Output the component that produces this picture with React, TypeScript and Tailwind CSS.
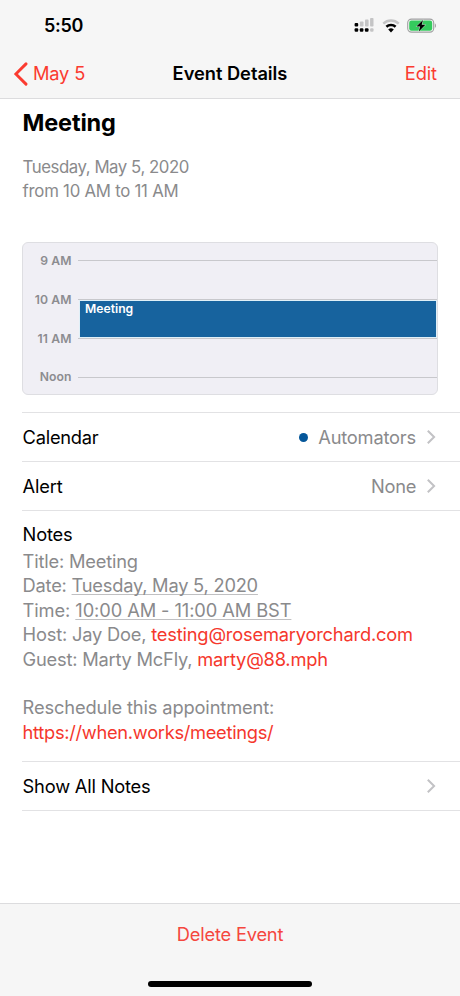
import React from "react";

type RowProps = {
  label: string;
  labelClass?: string;
  children?: React.ReactNode;
};

const SignalIcon = () => (
  <svg width="20" height="16" viewBox="0 0 20 16">
    <g fill="#c4c4c5">
      <rect x="5.9" y="3.4" width="3.6" height="5.2" rx="0.8" />
      <rect x="11" y="1.6" width="3.6" height="7" rx="0.8" />
      <rect x="16.1" y="0" width="3.4" height="8.6" rx="0.8" />
      <rect x="16.1" y="10.2" width="3.4" height="3.6" rx="1" />
    </g>
    <g fill="#000">
      <rect x="0.6" y="4.9" width="3.6" height="3.7" rx="1" />
      <rect x="0.6" y="10.2" width="3.6" height="3.6" rx="1" />
      <rect x="5.8" y="10.2" width="3.6" height="3.6" rx="1" />
      <rect x="10.9" y="10.2" width="3.6" height="3.6" rx="1" />
    </g>
  </svg>
);

const WifiIcon = () => (
  <svg width="18" height="14" viewBox="0 0 18 14" fill="none">
    <path d="M1.3 4.6a11.3 11.3 0 0 1 15.4 0" stroke="#c4c4c5" strokeWidth="2.5" />
    <path d="M4.4 7.8a6.8 6.8 0 0 1 9.2 0" stroke="#000" strokeWidth="2.6" />
    <path d="M9 13.4 6.2 10.6a4 4 0 0 1 5.6 0Z" fill="#000" />
  </svg>
);

const BatteryIcon = () => (
  <svg width="30" height="16" viewBox="0 0 30 16">
    <rect x="0.7" y="1.1" width="26" height="13" rx="3.8" fill="none" stroke="#a0a0a1" strokeWidth="1.1" />
    <rect x="2.2" y="2.5" width="23" height="10.2" rx="2.2" fill="#35cb5d" />
    <path d="M27.9 5.4c1.4.5 1.4 3.9 0 4.4Z" fill="#a0a0a1" />
    <path
      d="M16 1.9 9.4 8.5h3.7l-1.3 4.9 6.6-6.6h-3.7Z"
      fill="#000"
      stroke="#d8f5df"
      strokeWidth="0.9"
      paintOrder="stroke"
    />
  </svg>
);

const BackIcon = () => (
  <svg width="15" height="24" viewBox="0 0 15 24" fill="none">
    <path d="M13 1.9 2.9 12 13 22.1" stroke="#fb3b30" strokeWidth="2.9" strokeLinecap="round" />
  </svg>
);

const Chevron = () => (
  <svg className="ml-[10px]" width="10" height="16" viewBox="0 0 10 16" fill="none">
    <path d="m1.8 1.8 6.3 6.2-6.3 6.2" stroke="#c2c2c5" strokeWidth="2" />
  </svg>
);

const Row = ({ label, labelClass, children }: RowProps) => (
  <div className="ml-[22px] flex h-[49px] items-center border-t border-[#e2e2e4] pl-[0.6px] pr-6 pt-px text-[18.3px]">
    <span className={labelClass}>{label}</span>
    <span className="ml-auto flex items-center text-[#8a8a8c]">
      {children}
      <Chevron />
    </span>
  </div>
);

const Detected = ({ children }: { children: React.ReactNode }) => (
  <span className="underline decoration-[#c0c0c2] decoration-1 underline-offset-2 [text-decoration-skip-ink:none]">
    {children}
  </span>
);

const hours = ["9 AM", "10 AM", "11 AM", "Noon"];

const Timeline = () => (
  <div className="relative ml-[22px] mt-[38px] h-[153px] w-[416px] overflow-hidden rounded-[6px] border border-[#dedee2] bg-[#f0eff5]">
    <div className="-mt-[1.6px]">
      {hours.map((hour) => (
        <div key={hour} className="flex h-[38.8px] items-center">
          <span className="w-[48.6px] pt-px text-right text-[12.2px] font-semibold tracking-[0.1px] text-[#8c8c90]">{hour}</span>
          <span className="ml-[6.4px] h-px flex-1 bg-[#c8c8cc]" />
        </div>
      ))}
    </div>
    <div className="absolute left-[56px] top-[57px] h-[38px] w-[358px] border border-[#e0f0f8] bg-[#17639e] pl-[5px] text-[12.2px] font-semibold leading-4 text-white">
      Meeting
    </div>
  </div>
);

const App = () => (
  <div className="flex h-[996px] w-[460px] flex-col overflow-hidden whitespace-nowrap bg-white font-['Inter',sans-serif] text-black">
    <header className="h-[99px] border-b border-[#dcdcde] bg-[#f6f6f6]">
      <div className="flex h-[50px] items-center pl-11 pr-[23px] pt-px">
        <span className="text-[18px] font-semibold tracking-[-0.3px]">5:50</span>
        <span className="ml-auto flex items-center">
          <SignalIcon />
          <span className="ml-[8px] flex">
            <WifiIcon />
          </span>
          <span className="ml-[7px] flex">
            <BatteryIcon />
          </span>
        </span>
      </div>
      <div className="grid h-12 grid-cols-[1fr_auto_1fr] items-center px-[13px] text-[18.3px]">
        <span className="flex items-center gap-[5px] text-[#fb3b30]">
          <BackIcon />
          <span className="tracking-[-0.2px]">May 5</span>
        </span>
        <span className="font-semibold tracking-[-0.03px]">Event Details</span>
        <span className="pr-[10px] text-right tracking-[-0.1px] text-[#fb3b30]">Edit</span>
      </div>
    </header>

    <main className="flex-1">
      <h1 className="ml-[22.5px] mt-[8px] text-[23.5px] font-bold leading-8 tracking-[-0.15px]">Meeting</h1>
      <div className="ml-[22.6px] mt-4 text-[16.8px] leading-[24.4px] text-[#8a8a8c]">
        <p className="tracking-[-0.45px]">Tuesday, May 5, 2020</p>
        <p className="tracking-[-0.25px]">from 10 AM to 11 AM</p>
      </div>

      <Timeline />

      <div className="mt-[17px]">
        <Row label="Calendar" labelClass="tracking-[-0.25px]">
          <span className="mr-[10px] size-[9px] rounded-full bg-[#05579a]" />
          <span className="tracking-[-0.2px]">Automators</span>
        </Row>
        <Row label="Alert" labelClass="tracking-[-0.2px]">
          <span className="tracking-[-0.3px]">None</span>
        </Row>
        <section className="ml-[22px] h-[251px] border-t border-[#e2e2e4] pl-[0.6px] pt-[11px] text-[18.3px] leading-[24.4px]">
          <h2 className="tracking-[-0.2px]">Notes</h2>
          <div className="mt-[2.7px] text-[#8a8a8c]">
            <p className="tracking-[-0.2px]">Title: Meeting</p>
            <p className="tracking-[-0.23px]">
              Date: <Detected>Tuesday, May 5, 2020</Detected>
            </p>
            <p className="tracking-[-0.1px]">
              Time: <Detected>10:00 AM - 11:00 AM BST</Detected>
            </p>
            <p className="tracking-[-0.2px]">
              Host: Jay Doe, <span className="text-[#f5372c]">testing@rosemaryorchard.com</span>
            </p>
            <p className="tracking-[-0.22px]">
              Guest: Marty McFly, <span className="text-[#f5372c]">marty@88.mph</span>
            </p>
            <p>&nbsp;</p>
            <p className="tracking-[-0.14px]">Reschedule this appointment:</p>
            <p className="tracking-[-0.3px] text-[#f5372c]">https://when.works/meetings/</p>
          </div>
        </section>
        <Row label="Show All Notes" labelClass="tracking-[-0.2px]" />
        <div className="ml-[22px] border-t border-[#e2e2e4]" />
      </div>
    </main>

    <footer className="flex h-[93px] flex-col items-center justify-between border-t border-[#dcdcde] bg-[#f6f6f6] pb-[9px] pt-[18px]">
      <span className="text-[18.3px] leading-6 tracking-[-0.2px] text-[#f5473e]">Delete Event</span>
      <span className="h-[6px] w-[164px] rounded-full bg-black" />
    </footer>
  </div>
);

export default App;
